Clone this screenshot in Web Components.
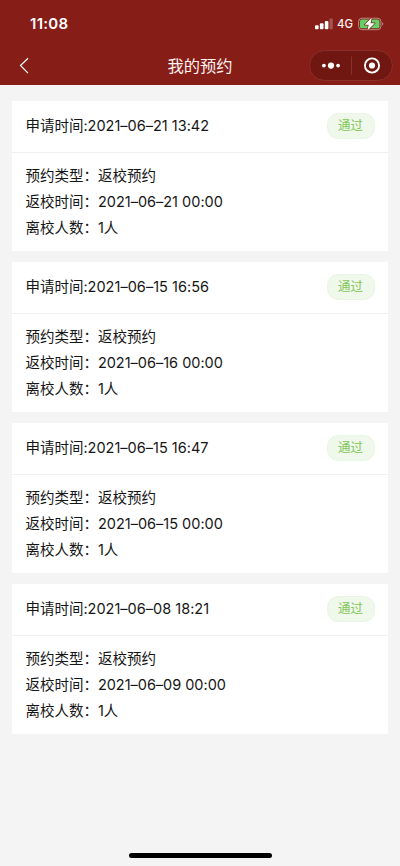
<!DOCTYPE html>
<html lang="zh-CN">
<head>
<meta charset="utf-8">
<title>我的预约</title>
<style>
html,body{margin:0;padding:0;background:#f4f4f4}
body{font-family:Inter,"Noto Sans CJK SC",sans-serif;color:#161616}
</style>
</head>
<body>
<booking-page></booking-page>
<script>
const define = (name, html, setup) => customElements.define(name, class extends HTMLElement {
  connectedCallback() {
    if (this.shadowRoot) return;
    this.attachShadow({ mode: "open" }).innerHTML = html;
    if (setup) setup(this);
  }
});

define("status-bar", `
<style>
:host{display:flex;height:47px;box-sizing:border-box;padding:1px 16px 0 30px;align-items:center;justify-content:space-between;color:#fff}
.time{font-size:15px;font-weight:600;line-height:20px;letter-spacing:.3px}
.right{display:flex;align-items:center}
.net{font-size:11.4px;font-weight:500;line-height:14px;margin:0 5px 0 4px;letter-spacing:0;color:#f6eeee}
svg{display:block}
</style>
<span class="time">11:08</span>
<div class="right">
<svg width="18" height="12" viewBox="0 0 18 12" fill="#fff"><rect y="7.2" width="3.6" height="4" rx="1"/><rect x="4.9" y="5.2" width="3.6" height="6" rx="1"/><rect x="9.8" y="3" width="3.6" height="8.2" rx="1"/><rect x="14.5" y=".4" width="3.3" height="10.8" rx="1" opacity=".25"/></svg>
<span class="net">4G</span>
<svg width="26" height="14" viewBox="0 0 26 14"><rect x=".6" y="1.2" width="22.3" height="11.5" rx="3.3" fill="none" stroke="#fff" stroke-opacity=".48"/><rect x="2" y="2.6" width="19.5" height="8.7" rx="1.9" fill="#63d168"/><path d="M24.1 5.1v3.7c1.6-.6 1.6-3.1 0-3.7z" fill="#fff" opacity=".45"/><path d="M13.8.5 6.6 7.8h4.1l-1.3 5.7 7.4-7.3h-4.2z" fill="#fff" stroke="#861d16" stroke-width="1.3" paint-order="stroke" stroke-linejoin="round"/></svg>
</div>`);

define("capsule-menu", `
<style>
:host{display:flex;box-sizing:border-box;width:84px;height:31px;border:1px solid #893029;border-radius:16px;background:#711711}
svg{display:block}
</style>
<svg width="82" height="29" viewBox="0 0 82 29" fill="#fff"><circle cx="13.9" cy="14.6" r="1.9"/><circle cx="21" cy="14.6" r="3.1"/><circle cx="28.1" cy="14.6" r="1.9"/><path d="M41.5 5.5v18" stroke="#893029"/><circle cx="62" cy="14.5" r="7.1" fill="none" stroke="#fff" stroke-width="1.9"/><circle cx="62" cy="14.5" r="3.1"/></svg>`);

define("nav-bar", `
<style>
:host{display:grid;grid-template-columns:84px 1fr 84px;height:37px;align-items:center;color:#fff;padding:0 7px 0 19px}
.back{display:block;margin-top:-2px}
.title{font-size:16.3px;line-height:24px;text-align:center;padding-right:12px;color:#fbf3f2}
capsule-menu{justify-self:end}
</style>
<svg class="back" width="12" height="18" viewBox="0 0 12 18" fill="none" stroke="#fff" stroke-width="1.2"><path d="M9 2.2 1.5 9.5 9 17.1"/></svg>
<span class="title"><slot></slot></span>
<capsule-menu></capsule-menu>`);

define("status-tag", `
<style>
:host{display:block;box-sizing:border-box;width:48px;height:26px;border:1px solid #ebf5e5;border-radius:11px;background:#f0f7eb;color:#7fc758;font-size:12.5px;line-height:24px;text-align:center}
</style><slot></slot>`);

define("booking-card", `
<style>
:host{display:block;box-sizing:border-box;height:150px;background:#fff;font-size:14.5px;line-height:26px}
header{display:flex;box-sizing:border-box;height:52px;padding:0 13px 2px 13px;align-items:center;justify-content:space-between;border-bottom:1px solid #efefef}
.rows{padding:10px 13px}
.row{display:flex;white-space:nowrap}
.n{display:inline-block;white-space:nowrap}
</style>
<header><span>申请时间:<span class="n applied"></span></span><status-tag>通过</status-tag></header>
<div class="rows">
<div class="row"><span>预约类型：</span><span>返校预约</span></div>
<div class="row"><span>返校时间：</span><span class="n back"></span></div>
<div class="row"><span>离校人数：</span><span>1人</span></div>
</div>`, el => {
  for (const key of ["applied", "back"]) {
    const node = el.shadowRoot.querySelector("." + key);
    node.textContent = el.getAttribute(key);
    const spacing = (Number(el.getAttribute(key + "-width")) - node.getBoundingClientRect().width) / node.textContent.length;
    node.style.letterSpacing = spacing.toFixed(3) + "px";
  }
});

define("home-indicator", `
<style>
:host{display:block;width:143px;height:5px;border-radius:3px;background:#000;position:fixed;left:128.5px;bottom:8px}
</style>`);

define("booking-page", `
<style>
:host{display:flex;flex-direction:column;height:866px;background:#f4f4f4}
.top{background:#861d16;height:85px}
main{display:flex;flex-direction:column;gap:11px;padding:16px 12.4px 0 12.4px}
</style>
<div class="top"><status-bar></status-bar><nav-bar>我的预约</nav-bar></div>
<main>
<booking-card applied="2021–06–21 13:42" applied-width="121.5" back="2021–06–21 00:00" back-width="125"></booking-card>
<booking-card applied="2021–06–15 16:56" applied-width="121.5" back="2021–06–16 00:00" back-width="125"></booking-card>
<booking-card applied="2021–06–15 16:47" applied-width="121" back="2021–06–15 00:00" back-width="125"></booking-card>
<booking-card applied="2021–06–08 18:21" applied-width="121.5" back="2021–06–09 00:00" back-width="128"></booking-card>
</main>
<home-indicator></home-indicator>`);
</script>
</body>
</html>
